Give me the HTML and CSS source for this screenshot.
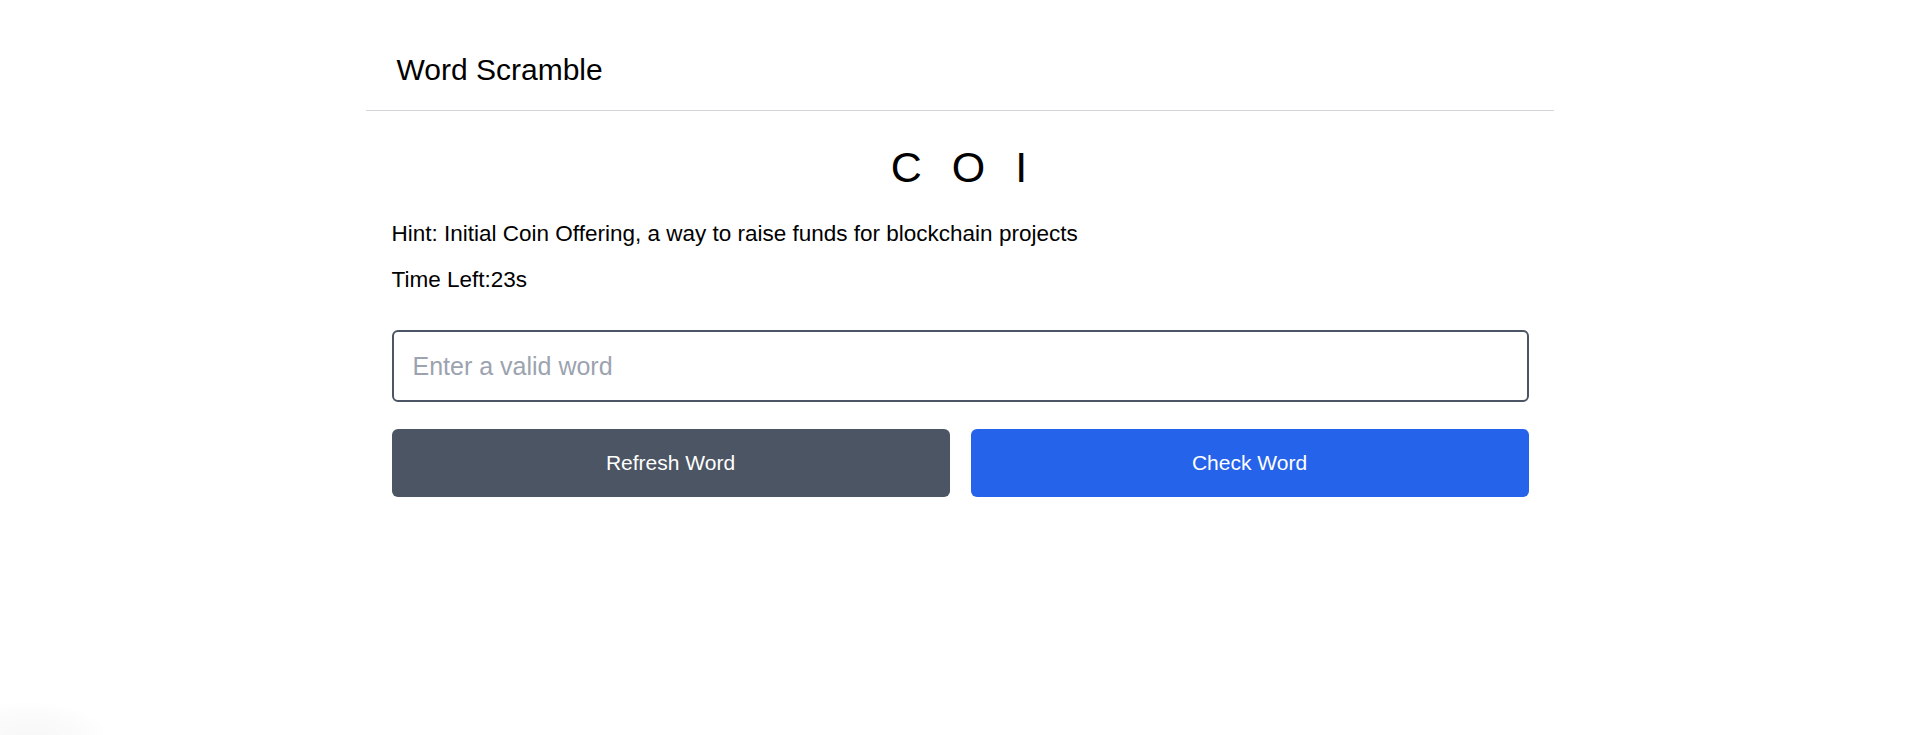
FILE: index.html
```html
<!DOCTYPE html>
<html lang="en">
<head>
<meta charset="utf-8">
<title>Word Scramble</title>
<link rel="stylesheet" href="styles.css">
</head>
<body>
  <div class="app">
    <header class="app-header">
      <h1 class="app-title">Word Scramble</h1>
    </header>
    <main class="game">
      <div class="scrambled">
        <span class="letter">C</span>
        <span class="letter">O</span>
        <span class="letter">I</span>
      </div>
      <p class="hint">Hint: Initial Coin Offering, a way to raise funds for blockchain projects</p>
      <p class="timer">Time Left:23s</p>
      <input class="word-input" type="text" placeholder="Enter a valid word">
      <div class="actions">
        <button class="btn btn-refresh" type="button">Refresh Word</button>
        <button class="btn btn-check" type="button">Check Word</button>
      </div>
    </main>
  </div>
  <div class="corner-shade"></div>
</body>
</html>
```
FILE: styles.css
```css
* {
  box-sizing: border-box;
}

html, body {
  margin: 0;
  padding: 0;
  background: #ffffff;
}

body {
  font-family: "Liberation Sans", Arial, sans-serif;
  color: #000000;
  overflow: hidden;
}

.app {
  width: 1188px;
  margin: 0 auto;
}

.app-header {
  padding: 53px 30px 23px 31px;
  border-bottom: 1px solid #d4d4d8;
}

.app-title {
  margin: 0;
  font-size: 30px;
  font-weight: 400;
  line-height: 34px;
}

.game {
  padding: 31px 25px 0 26px;
  display: flex;
  flex-direction: column;
}

.scrambled {
  display: flex;
  justify-content: center;
  gap: 30px;
  font-size: 43px;
  line-height: 50px;
  padding-right: 2px;
}

.letter {
  display: block;
}

.hint,
.timer {
  margin: 0;
  font-size: 22.5px;
  line-height: 32px;
}

.hint {
  margin-top: 26px;
}

.timer {
  margin-top: 14px;
}

.word-input {
  margin-top: 34px;
  height: 72px;
  width: 100%;
  border: 2px solid #4b5563;
  border-radius: 6px;
  padding: 0 19px;
  font-family: "Liberation Sans", Arial, sans-serif;
  font-size: 25px;
  color: #111827;
  outline: none;
  background: #ffffff;
}

.word-input::placeholder {
  color: #9ca3af;
}

.actions {
  margin-top: 27px;
  display: grid;
  grid-template-columns: 1fr 1fr;
  gap: 21px;
}

.btn {
  height: 68px;
  border: none;
  border-radius: 6px;
  color: #ffffff;
  font-family: "Liberation Sans", Arial, sans-serif;
  font-size: 21px;
  cursor: pointer;
}

.btn-refresh {
  background: #4b5563;
}

.btn-check {
  background: #2563eb;
}

.corner-shade {
  position: fixed;
  left: -50px;
  bottom: -45px;
  width: 160px;
  height: 80px;
  border-radius: 50%;
  background: radial-gradient(ellipse at center, rgba(0, 0, 0, 0.03) 0%, rgba(0, 0, 0, 0.015) 45%, rgba(0, 0, 0, 0) 70%);
  pointer-events: none;
}
```
